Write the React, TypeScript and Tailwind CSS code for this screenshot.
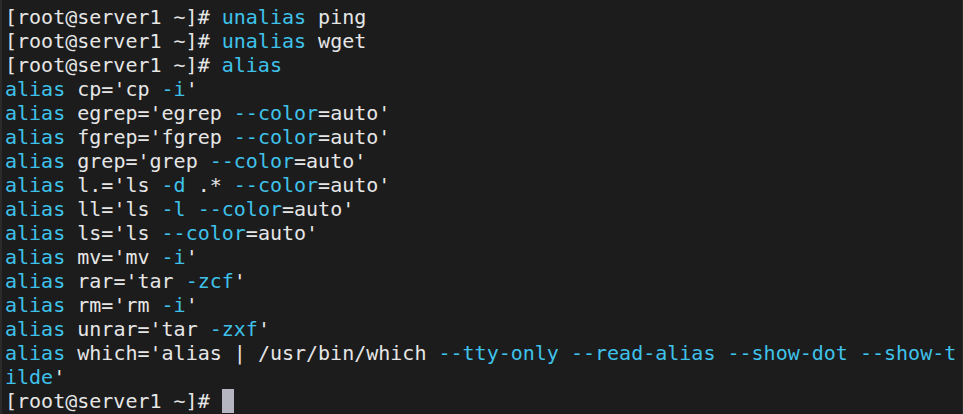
const C = "c";
const W = "w";

type Seg = [string, string];

const prompt: Seg = ["[root@server1 ~]# ", W];

const lines: Seg[][] = [
  [prompt, ["unalias", C], [" ping", W]],
  [prompt, ["unalias", C], [" wget", W]],
  [prompt, ["alias", C]],
  [["alias", C], [" cp='cp ", W], ["-i", C], ["'", W]],
  [["alias", C], [" egrep='egrep ", W], ["--color", C], ["=auto'", W]],
  [["alias", C], [" fgrep='fgrep ", W], ["--color", C], ["=auto'", W]],
  [["alias", C], [" grep='grep ", W], ["--color", C], ["=auto'", W]],
  [["alias", C], [" l.='ls ", W], ["-d", C], [" .* ", W], ["--color", C], ["=auto'", W]],
  [["alias", C], [" ll='ls ", W], ["-l", C], [" ", W], ["--color", C], ["=auto'", W]],
  [["alias", C], [" ls='ls ", W], ["--color", C], ["=auto'", W]],
  [["alias", C], [" mv='mv ", W], ["-i", C], ["'", W]],
  [["alias", C], [" rar='tar ", W], ["-zcf", C], ["'", W]],
  [["alias", C], [" rm='rm ", W], ["-i", C], ["'", W]],
  [["alias", C], [" unrar='tar ", W], ["-zxf", C], ["'", W]],
  [
    ["alias", C],
    [" which='alias | /usr/bin/which ", W],
    ["--tty-only --read-alias --show-dot --show-t", C],
  ],
  [["ilde", C], ["'", W]],
];

export default function App() {
  return (
    <div className="w-[963px] h-[414px] bg-[#1c1c1c] border-l-2 border-r border-[#2b2b2b] overflow-hidden pt-[5px] pl-[3px]">
      <div className="font-['DejaVu_Sans_Mono',monospace] text-[20px] leading-[24px] text-[#e6e6e6] whitespace-pre">
        {lines.map((line, i) => (
          <div key={i}>
            {line.map(([text, kind], j) => (
              <span key={j} className={kind === C ? "text-[#3fc2ea]" : ""}>
                {text}
              </span>
            ))}
          </div>
        ))}
        <div className="flex items-center">
          <span>[root@server1 ~]# </span>
          <span className="inline-block w-[12px] h-[24px] bg-[#b5b5c2]" />
        </div>
      </div>
    </div>
  );
}
